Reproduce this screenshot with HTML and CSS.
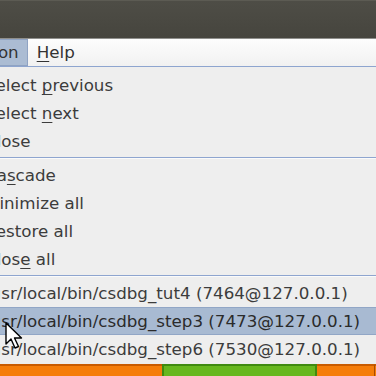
FILE: index.html
```html
<!DOCTYPE html>
<html>
<head>
    <meta charset="utf-8">
    <title>csdbg - Session menu</title>
    <link rel="stylesheet" href="styles.css">
</head>
<body>
    <div class="titlebar"></div>

    <div class="menubar">
        <span class="menu-title active"><u>S</u>ession</span>
        <span class="menu-title"><u>H</u>elp</span>
    </div>

    <div class="popup">
        <div class="item">Select <u>p</u>revious</div>
        <div class="item">Select <u>n</u>ext</div>
        <div class="item">Close</div>
        <div class="sep"></div>
        <div class="item">Ca<u>s</u>cade</div>
        <div class="item">Minimize all</div>
        <div class="item">Restore all</div>
        <div class="item">Clos<u>e</u> all</div>
        <div class="sep"></div>
        <div class="item">/usr/local/bin/csdbg_tut4 (7464@127.0.0.1)</div>
        <div class="item hover">/usr/local/bin/csdbg_step3 (7473@127.0.0.1)</div>
        <div class="item">/usr/local/bin/csdbg_step6 (7530@127.0.0.1)</div>
    </div>

    <div class="statusbar">
        <span class="status-orange"></span>
        <span class="status-green"></span>
        <span class="status-orange wide"></span>
        <span class="status-orange"></span>
    </div>

    <!-- mouse pointer over the hovered item -->
    <svg class="cursor" width="20" height="28" viewBox="0 0 20 28">
        <path d="M1 1 L1 22 L6 17 L10 26 L13.5 24.5 L9.5 16 L16.5 16 Z" fill="#fff" stroke="#000" stroke-width="1.4" stroke-linejoin="round"/>
    </svg>
</body>
</html>
```

FILE: styles.css
```css
body {
    margin: 0;
    width: 376px;
    height: 376px;
    overflow: hidden;
    position: relative;
    background-color: #ededed;
    font-family: "DejaVu Sans", sans-serif;
    font-size: 16.7px;
}
u {
    text-decoration-thickness: 1px;
    text-underline-offset: 3px;
}
.titlebar {
    background: linear-gradient(#4e4d46, #46453e);
    border-top: 1px solid #5c5b53;
    border-bottom: 1px solid #8f8f8c;
    box-sizing: border-box;
    height: 39px;
}
.menubar {
    display: flex;
    height: 27px;
    background: linear-gradient(#fdfdfd, #f1f1f1);
    border-bottom: 1px solid #8ea5cf;
    color: #333;
    overflow: hidden;
}
.menu-title {
    padding: 0 8px;
    line-height: 25px;
    border: 1px solid transparent;
}
.menu-title.active {
    margin-left: -54px;
    background-color: #abbcd3;
    border-color: #8fa3c3;
}
.popup {
    padding-top: 4px;
    background-color: #eeeeee;
    color: #3c3c3c;
}
.item {
    height: 28px;
    line-height: 29px;
    margin-left: -15px;
    white-space: nowrap;
    box-sizing: border-box;
}
.item.hover {
    background-color: #a8bad2;
    border-top: 1px solid #91a6c6;
    border-bottom: 1px solid #91a6c6;
    line-height: 27px;
    color: #2b2b2b;
}
.sep {
    height: 6px;
    box-sizing: border-box;
    border-top: 2px solid #eeeeee;
}
.sep::before {
    content: "";
    display: block;
    height: 1px;
    background-color: #8ea5cf;
}
.sep::after {
    content: "";
    display: block;
    height: 1px;
    background-color: #fafafa;
}
.statusbar {
    display: flex;
    margin-top: 1px;
    height: 12px;
}
.status-orange {
    flex: 0 0 162px;
    background-color: #f57d0a;
    border-top: 2px solid #c95b00;
}
.status-green {
    flex: 0 0 151px;
    background-color: #67b71e;
    border: 2px solid #3f8a10;
    border-bottom: none;
}
.status-orange.wide {
    flex: 0 0 57px;
}
.status-orange:last-child {
    flex: 1;
    border-left: 1px solid #a94a00;
}
.cursor {
    position: absolute;
    left: 5px;
    top: 322px;
}
```
